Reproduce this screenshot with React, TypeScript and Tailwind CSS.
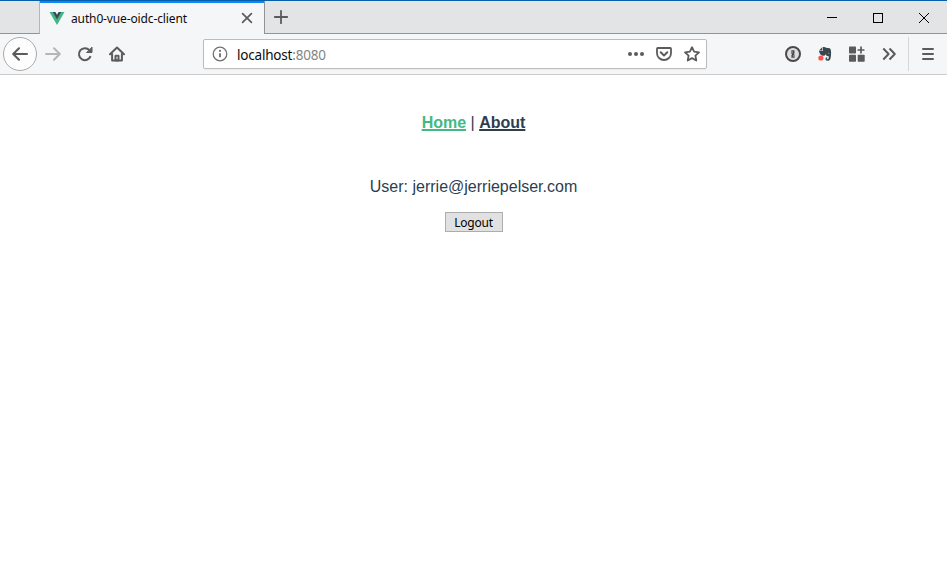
import type { ReactNode } from 'react';

function Icon({ children, color = '#5b5b5d' }: { children: ReactNode; color?: string }) {
  return (
    <svg className="h-4 w-4 shrink-0" viewBox="0 0 16 16" fill="none" stroke={color} strokeWidth="2" strokeLinecap="round" strokeLinejoin="round">
      {children}
    </svg>
  );
}

function TabStrip() {
  return (
    <div className="flex h-[34px] border-t border-[#0560ac] bg-[#e3e4e6]">
      <div className="w-10 border-r border-b border-r-[#b5b6b8] border-b-[#929395]" />
      <div className="flex w-56 items-center border-t-2 border-[#0a84ff] bg-[#f5f6f7] pl-[9px]">
        <svg className="h-4 w-4 shrink-0" viewBox="0 0 16 16">
          <path d="M.5 1H4L8 8L12 1H15.5L8 14Z" fill="#41b883" />
          <path d="M3.7 1H6.4L8 3.7L9.6 1H12.3L8 8.5Z" fill="#35495e" />
        </svg>
        <span className="ml-1.5 w-[168px] text-[12px] leading-4 tracking-[-0.13px] whitespace-nowrap text-[#0c0c0d]">auth0-vue-oidc-client</span>
        <Icon>
          <path d="M3.6 2.6L12.4 11.4M12.4 2.6L3.6 11.4" strokeWidth="1.7" />
        </Icon>
      </div>
      <div className="flex flex-1 items-start border-b border-l border-b-[#929395] border-l-[#929395] pt-2 pl-2">
        <Icon>
          <path d="M8 1.8V14.2M1.8 8H14.2" strokeWidth="1.8" />
        </Icon>
        <svg className="mt-1 ml-auto h-3 w-[138px]" viewBox="0 0 138 12" fill="none" stroke="#000" shapeRendering="crispEdges">
          <path d="M18 4.5H28" />
          <rect x="64.5" y="0.5" width="9" height="9" />
          <path d="M110 0L120 10M120 0L110 10" shapeRendering="auto" />
        </svg>
      </div>
    </div>
  );
}

function Toolbar() {
  return (
    <div className="flex h-[41px] items-center border-b border-[#cccccd] bg-[#f5f6f7] pl-[3px]">
      <div className="flex h-[34px] w-[34px] items-center justify-center rounded-full border border-[#aaaaab] bg-[#fdfdfd]">
        <Icon>
          <path d="M15 8H1.5M7 2.2L1.2 8L7 13.8" />
        </Icon>
      </div>
      <div className="ml-2 flex gap-4">
        <Icon color="#b5b6b7">
          <path d="M1 8H14.5M9 2.2L14.8 8L9 13.8" />
        </Icon>
        <Icon>
          <path d="M13.6 10.2A6 6 0 1 1 12.4 4.1" strokeLinecap="butt" />
          <path d="M15 1.5V6.5H10Z" fill="#5b5b5d" strokeWidth="1" />
        </Icon>
        <Icon>
          <path d="M1 8.3L8 1.5L15 8.3M3.1 8V14.5H12.9V8" />
          <path d="M6 14.5V9.3H10V14.5Z" fill="#5b5b5d" strokeWidth="1" />
          <path d="M8 11V12.8" stroke="#f5f6f7" strokeWidth="1" />
        </Icon>
      </div>
      <div className="ml-[78px] flex h-[30px] w-[504px] items-center rounded-xs border border-[#bcbcbd] bg-white px-2 shadow-xs">
        <Icon color="#737374">
          <circle cx="8" cy="8" r="6.8" strokeWidth="1.3" />
          <path d="M8 7.3V11.3" strokeWidth="1.9" strokeLinecap="butt" />
          <circle cx="8" cy="4.9" r="1.1" fill="#737374" stroke="none" />
        </Icon>
        <span className="ml-[9px] pt-0.5 text-[13.5px] leading-5 tracking-[-0.2px] text-[#0c0c0d]">
          localhost<span className="text-[#858585]">:8080</span>
        </span>
        <div className="mr-[-2px] ml-auto flex gap-3">
          <Icon>
            <g fill="#5b5b5d" stroke="none">
              <circle cx="2" cy="8" r="2" />
              <circle cx="8" cy="8" r="2" />
              <circle cx="14" cy="8" r="2" />
            </g>
          </Icon>
          <Icon>
            <path d="M1.8 2H14.2Q15 2 15 2.8V7.2A7 6.8 0 0 1 1 7.2V2.8Q1 2 1.8 2Z" strokeWidth="1.8" />
            <path d="M4.7 6.3L8 9.4L11.3 6.3" />
          </Icon>
          <Icon>
            <path d="M8 1.2L10.1 5.7L15 6.3L11.4 9.6L12.3 14.5L8 12.1L3.7 14.5L4.6 9.6L1 6.3L5.9 5.7Z" strokeWidth="1.8" />
          </Icon>
        </div>
      </div>
      <div className="ml-[78px] flex gap-4">
        <Icon>
          <circle cx="8" cy="8" r="7" fill="#dedede" stroke="#49494b" />
          <path d="M6.3 4.2H9.5V7.2L8.9 8L9.6 8.8V11.8H6.4V9L7.1 8.2L6.3 7.4Z" fill="#49494b" stroke="none" />
          <path d="M7.2 5.5V6.8M8.7 9.3V10.5" stroke="#dedede" strokeWidth=".5" />
        </Icon>
        <Icon>
          <path d="M5.2 1.2L2 4.5H5.2Z" fill="#38474e" stroke="none" />
          <path d="M5.8 1.1Q8.3 .7 9 1.8L12.7 2.3Q14 2.8 14.1 7Q14.1 14.7 11.3 14.8Q8.4 14.9 8.4 12.9Q8.4 11 10.3 11.2V12.4Q9.5 12.4 9.7 13.2Q11.9 13.6 12 10.5L9.5 9.7L8.8 8.2Q8.1 10 5.7 9.7Q2.7 9.3 2 5.1H5.8Z" fill="#38474e" stroke="none" />
          <path d="M11.3 7.2Q12 6.8 12.3 7.6" stroke="#a9b0b4" strokeWidth=".6" />
          <circle cx="3.9" cy="12" r="2.6" fill="#ff5151" stroke="none" />
        </Icon>
        <Icon>
          <g fill="#5b5b5d" stroke="none">
            <rect x="0" y="0.5" width="7" height="7" rx=".7" />
            <rect x="0" y="8.7" width="7" height="7" rx=".7" />
            <rect x="8.7" y="8.7" width="7" height="7" rx=".7" />
          </g>
          <path d="M12 1.2V6.8M9.2 4H14.8" strokeWidth="1.7" />
        </Icon>
        <Icon>
          <path d="M2.3 2.5L7.6 8L2.3 13.5M8.5 2.5L13.8 8L8.5 13.5" strokeLinecap="butt" />
        </Icon>
      </div>
      <div className="ml-[11px] h-[34px] w-px bg-[#d5d6d7]" />
      <div className="ml-[11px]">
        <Icon>
          <path d="M3 3H13M3 8H13M3 13H13" />
        </Icon>
      </div>
    </div>
  );
}

export default function App() {
  return (
    <div className="flex h-[576px] w-[947px] flex-col overflow-hidden bg-white font-['Noto_Sans',sans-serif]">
      <TabStrip />
      <Toolbar />
      <main className="flex flex-1 flex-col items-center pt-[39px] font-['Liberation_Sans',sans-serif] text-base leading-[18px] text-[#2c3e50]">
        <nav>
          <a className="font-bold text-[#42b983] underline decoration-2">Home</a> | <a className="font-bold underline decoration-2">About</a>
        </nav>
        <p className="mt-[46px]">User: jerrie@jerriepelser.com</p>
        <button className="mt-4 h-5 w-[58px] border border-[#adadad] bg-[#e1e1e1] pt-px font-['Noto_Sans',sans-serif] text-[12px] leading-[18px] tracking-[-0.2px] text-black">Logout</button>
      </main>
    </div>
  );
}
